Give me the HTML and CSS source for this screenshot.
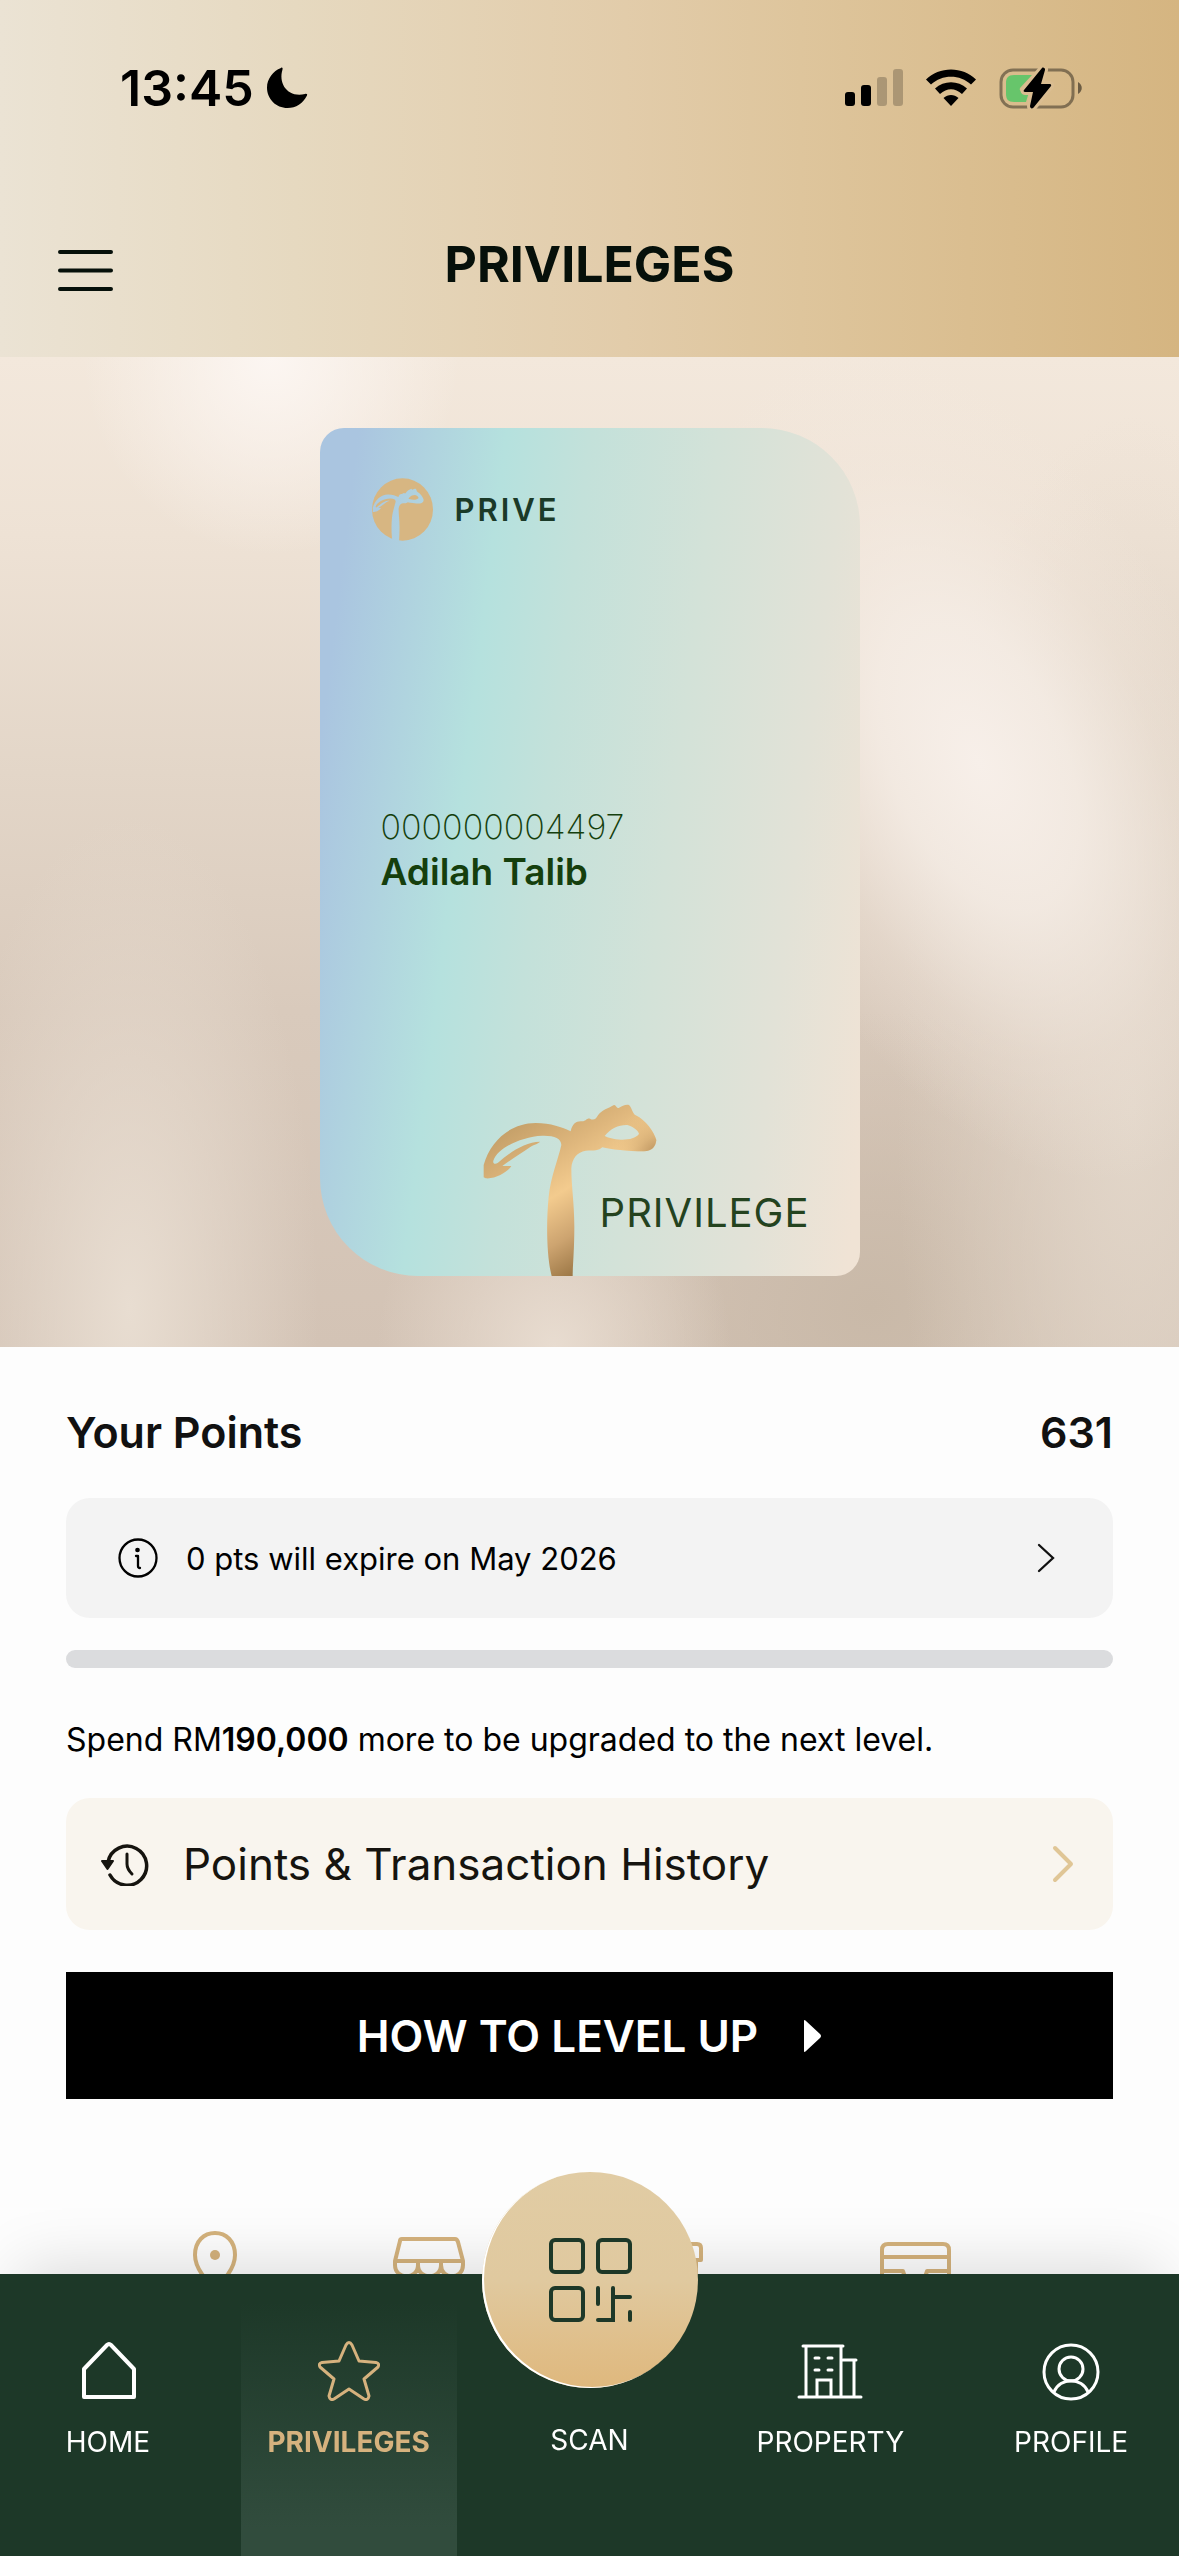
FILE: index.html
```html
<!DOCTYPE html>
<html lang="en">
<head>
<meta charset="UTF-8">
<meta name="viewport" content="width=device-width, initial-scale=1.0">
<title>Privileges</title>
<link rel="stylesheet" href="styles.css">
</head>
<body>
<header class="header">
  <div class="status-bar">
    <div class="status-left">
      <span class="time">13:45</span>
      <svg width="42" height="42" viewBox="0 0 42 42"><path d="M15 1C16 0 17 1 16.500 2.500C12 17 22 31 39 27C41 26.500 41.500 27.500 41 28.500C37 36.500 30 41 21.500 41C10 41 1 32 1 20.500C1 12 7 4 15 1Z"/></svg>
    </div>
    <div class="status-right">
      <svg width="58" height="38" viewBox="0 0 58 38">
        <rect x="0" y="23" width="10" height="14" rx="3"/>
        <rect x="16" y="16" width="10" height="21" rx="3"/>
        <rect x="32" y="8" width="10" height="29" rx="3" opacity=".22"/>
        <rect x="48" y="0" width="10" height="37" rx="3" opacity=".22"/>
      </svg>
      <svg width="52" height="38" viewBox="0 0 52 38">
        <path d="M1 10.500C14 -3 38 -3 51 10.500L46 15.500C35 5 17 5 6 15.500Z"/>
        <path d="M10 19.500C19 11 33 11 42 19.500L37 25C30 18.500 22 18.500 15 25Z"/>
        <path d="M18.500 29C23 25 29 25 33.500 29L26 37Z"/>
      </svg>
      <svg width="84" height="42" viewBox="0 0 84 42">
        <rect x="2" y="3" width="72" height="37" rx="12" fill="none" stroke="#000" stroke-opacity=".4" stroke-width="3"/>
        <path d="M79 15C84 18 84 24 79 27Z" opacity=".5"/>
        <path d="M15 8H33L21 21C20 24 22 25 30 25L27 35H15C9 35 7 32 7 27V16C7 11 9 8 15 8Z" fill="#67c56b"/>
        <path d="M43 1L25 23C24 24 25 25 26 25H34L31 39C31 42 34 42 35 40L52 19C52.500 18 52 17 51 17H42L46 3C46.500 1 44 0 43 1Z" stroke="#dabd91" stroke-width="6" paint-order="stroke"/>
      </svg>
    </div>
  </div>
  <div class="app-bar">
    <button class="menu-btn" type="button" aria-label="Menu">
      <svg width="56" height="56" viewBox="0 0 56 56" stroke="#06100a" stroke-width="4" stroke-linecap="round"><path d="M3 16H54M3 34.500H54M3 53H54"/></svg>
    </button>
    <h1 class="title">PRIVILEGES</h1>
  </div>
</header>

<main>
  <section class="hero">
    <div class="card">
      <div class="card-brand">
        <svg width="61" height="63" viewBox="36 26 182 188">
          <defs>
            <path id="palm" fill-rule="evenodd" d="M39 262L39 225C60 150 120 100 195 99C240 99 275 112 300 124C305 100 318 92 335 94C345 94 348 84 358 86C368 92 376 88 382 76C392 60 415 54 430 45C436 44 436 54 444 54C455 48 465 42 475 45C485 55 485 70 495 76C525 90 550 125 557 150C555 170 545 182 520 184C470 184 420 178 395 172C385 182 370 182 345 182C320 186 304 205 302 235C302 290 311 340 311 410C311 480 306 530 306 558L243 558C228 500 226 400 234 320C240 260 262 210 272 165C272 145 250 136 215 137C150 140 80 175 68 212C66 222 74 224 82 218C120 185 165 155 208 155C205 160 195 162 180 170C150 190 120 210 95 228C105 228 112 228 122 228C112 245 75 268 45 265ZM402 138C420 115 445 104 470 105C490 110 505 125 505 132C495 145 475 150 450 149C430 148 410 143 402 138Z"/>
            <mask id="palm-cut" maskUnits="userSpaceOnUse" x="30" y="20" width="200" height="200">
              <rect x="30" y="20" width="200" height="200" fill="#fff"/>
              <use href="#palm" transform="translate(27 44) scale(.293 .315)" fill="#000"/>
            </mask>
          </defs>
          <ellipse cx="127" cy="120" rx="91" ry="93" fill="#d7b682" mask="url(#palm-cut)"/>
        </svg>
        <span class="tier">PRIVE</span>
      </div>
      <div class="card-holder">
        <p class="card-number">000000004497</p>
        <p class="card-name">Adilah Talib</p>
      </div>
      <svg class="card-palm" width="174" height="172" viewBox="37 42 522 516">
        <defs>
          <linearGradient id="gold" gradientUnits="userSpaceOnUse" x1="110" y1="110" x2="370" y2="540">
            <stop offset="0" stop-color="#c49f68"/>
            <stop offset=".28" stop-color="#deb67c"/>
            <stop offset=".5" stop-color="#f3cb8e"/>
            <stop offset=".75" stop-color="#cda470"/>
            <stop offset="1" stop-color="#94703f"/>
          </linearGradient>
          <radialGradient id="gold-tip" gradientUnits="userSpaceOnUse" cx="560" cy="190" r="140">
            <stop offset="0" stop-color="#b8905c"/>
            <stop offset="1" stop-color="#f0c88b" stop-opacity="0"/>
          </radialGradient>
        </defs>
        <use href="#palm" fill="url(#gold)"/>
        <use href="#palm" fill="url(#gold-tip)"/>
      </svg>
      <p class="card-label">PRIVILEGE</p>
    </div>
  </section>

  <section class="content">
    <div class="points">
      <h2>Your Points</h2>
      <span class="points-value">631</span>
    </div>

    <button class="expiry" type="button">
      <svg width="40" height="40" viewBox="0 0 40 40" fill="none" stroke="#000" stroke-width="2.300" stroke-linecap="round" stroke-linejoin="round">
        <circle cx="20" cy="20" r="18.500"/>
        <path d="M18 18H20V28Q20 30 22 30"/>
        <circle cx="19.500" cy="12" r="1.200" fill="#000"/>
      </svg>
      <span class="row-text">0 pts will expire on May 2026</span>
      <svg width="18" height="30" viewBox="0 0 18 30" fill="none" stroke="#111" stroke-width="2.300" stroke-linecap="round"><path d="M2 2L16 15L2 28"/></svg>
    </button>

    <div class="progress" role="progressbar" aria-label="Level progress" aria-valuenow="0" aria-valuemin="0" aria-valuemax="100"></div>
    <p class="spend">Spend RM<b>190,000</b> more to be upgraded to the next level.</p>

    <button class="history" type="button">
      <svg width="48" height="44" viewBox="0 0 48 44" fill="none" stroke="#16140f" stroke-width="3.500" stroke-linecap="round">
        <path d="M7 20A19.500 19.500 0 1 1 9 33"/>
        <path d="M26 12V22Q26 27 31 32" stroke-width="3"/>
        <path d="M1 19H12L6.500 27Z" fill="#16140f" stroke-width="2" stroke-linejoin="round"/>
      </svg>
      <span class="row-text">Points &amp; Transaction History</span>
      <svg width="22" height="38" viewBox="0 0 22 38" fill="none" stroke="#e0c696" stroke-width="4" stroke-linecap="round" stroke-linejoin="round"><path d="M3 3L19 19L3 35"/></svg>
    </button>

    <button class="level-up" type="button">
      HOW TO LEVEL UP
      <svg width="18" height="32" viewBox="0 0 18 32" fill="#fff"><path d="M0 1Q0 -1 2 1L16 14Q18 16 16 18L2 31Q0 33 0 31Z"/></svg>
    </button>

    <nav class="shortcuts" aria-label="Shortcuts">
      <a href="#outlets" aria-label="Outlets">
        <svg width="44" height="60" viewBox="0 0 44 60" fill="none" stroke="#d4b27c" stroke-width="4"><path d="M22 58C14 50 2 38 2 24C2 10 11 2 22 2S42 10 42 24C42 38 30 50 22 58Z"/><circle cx="22" cy="24" r="5" fill="#d4b27c" stroke="none"/></svg>
      </a>
      <a href="#shops" aria-label="Shops">
        <svg width="72" height="60" viewBox="0 -6 72 60" fill="none" stroke="#d4b27c" stroke-width="4" stroke-linejoin="round"><path d="M9 2H62Q64 2 65 5L70 24V28C70 43 48 43 48 28C48 43 25 43 25 28C25 43 2 43 2 28V24L7 4Q7 2 9 2ZM2 24H70M25 24V28M48 24V28M9 40V52H63V40"/></svg>
      </a>
      <a href="#vouchers" aria-label="Vouchers">
        <svg width="66" height="60" viewBox="0 -11 66 60" fill="none" stroke="#d4b27c" stroke-width="4" stroke-linejoin="round"><path d="M6 2H60Q64 2 64 6V18H2V6Q2 2 6 2ZM7 18V50H59V18"/></svg>
      </a>
      <a href="#wallet" aria-label="Wallet">
        <svg width="72" height="60" viewBox="0 -11 72 60" fill="none" stroke="#d4b27c" stroke-width="4" stroke-linejoin="round"><path d="M8 2H63Q69 2 69 8V46H2V8Q2 2 8 2ZM2 15H69M2 29H23C25 42 45 42 47 29H69"/></svg>
      </a>
    </nav>
  </section>
</main>

<nav class="tab-bar" aria-label="Main">
  <a class="tab" href="#home">
    <svg width="60" height="60" viewBox="0 0 60 60" fill="none" stroke="#fff" stroke-width="4" stroke-linejoin="round"><path d="M6 56V28L29 4Q31 2 33 4L56 28V56Z"/></svg>
    <span>HOME</span>
  </a>
  <a class="tab active" href="#privileges" aria-current="page">
    <svg width="62" height="60" viewBox="0 0 62 60" fill="none" stroke="#d6b27e" stroke-width="3" stroke-linejoin="round"><path d="M28 4Q31 -1 34 4L41 20L58 21.500Q62 22.500 60 26L46 38L51 55Q50 60 46 58L31 48L16 58Q12 60 11 55L16 38L2 26Q0 22.500 4 21.500L21 20Z"/></svg>
    <span>PRIVILEGES</span>
  </a>
  <a class="tab scan" href="#scan">
    <span class="scan-btn">
      <svg width="84" height="84" viewBox="0 0 84 84" fill="none" stroke="#1d3828" stroke-width="4" stroke-linecap="round">
        <rect x="3" y="2" width="32" height="32" rx="4"/>
        <rect x="50" y="2" width="32" height="32" rx="4"/>
        <rect x="3" y="50" width="32" height="32" rx="4"/>
        <path d="M50 50V66M50 82H65V50M65 59H82M82 74V82"/>
      </svg>
    </span>
    <span>SCAN</span>
  </a>
  <a class="tab" href="#property">
    <svg width="66" height="60" viewBox="0 0 66 60" fill="none" stroke="#fff" stroke-width="3" stroke-linecap="round">
      <path d="M2 56H64M6 5H46M9 5V56M44 5V56M46 19H59M57 19V56M20 56V39H34V56M18 17H22M31 17H35M18 29H22M31 29H35"/>
    </svg>
    <span>PROPERTY</span>
  </a>
  <a class="tab" href="#profile">
    <svg width="60" height="60" viewBox="0 0 60 60" fill="none" stroke="#fff" stroke-width="3">
      <circle cx="30" cy="31" r="27"/>
      <circle cx="30" cy="28" r="12"/>
      <path d="M13 51C19 36 41 36 47 51"/>
    </svg>
    <span>PROFILE</span>
  </a>
</nav>
</body>
</html>
```

FILE: styles.css
```css
* {
  box-sizing: border-box;
}

body {
  margin: 0;
  background-color: #fdfdfd;
  color: #000;
  font-family: Inter, "Liberation Sans", sans-serif;
}

h1,
h2,
p {
  margin: 0;
}

button {
  border: none;
  font-family: inherit;
  color: inherit;
  cursor: pointer;
}

svg {
  display: block;
  flex-shrink: 0;
}

/* Header */
.header {
  padding-bottom: 5px;
  background: linear-gradient(90deg, #ebe3d4 0%, #e6d9c0 25%, #e2ccaa 53%, #dec59c 68%, #d5b581 100%);
}

.status-bar {
  display: flex;
  justify-content: space-between;
  align-items: center;
  height: 176px;
  padding: 0 96px 0 120px;
}

.status-left {
  display: flex;
  align-items: center;
  gap: 12px;
}

.time {
  font-size: 50px;
  font-weight: 600;
}

.status-right {
  display: flex;
  align-items: center;
  gap: 22px;
}

.app-bar {
  display: grid;
  grid-template-columns: 1fr auto 1fr;
  align-items: center;
  height: 176px;
  padding: 0 57px;
}

.menu-btn {
  justify-self: start;
  padding: 0;
  background: none;
}

.title {
  font-size: 50px;
  font-weight: 700;
  color: #06100a;
}

/* Membership card */
.hero {
  position: relative;
  display: flex;
  justify-content: center;
  padding: 71px 0;
  overflow: hidden;
  background:
    radial-gradient(ellipse 16% 20% at 23% 0%, #fcf6f2 0%, rgba(252, 246, 242, 0) 100%),
    radial-gradient(ellipse 16% 50% at 11% 96%, #e8ddd1 0%, rgba(232, 221, 209, 0) 100%),
    radial-gradient(ellipse 15% 20% at 47% 100%, #e8dcd0 0%, rgba(232, 220, 208, 0) 100%),
    radial-gradient(ellipse 20% 70% at 96% 76%, #e2d6c9 0%, rgba(226, 214, 201, 0) 100%),
    radial-gradient(ellipse 28% 30% at 74% 96%, #c9b9a8 0%, rgba(201, 185, 168, 0) 100%),
    linear-gradient(#f3e8dc 0%, #eee2d5 18%, #e3d6c8 42%, #d9cabc 66%, #d3c3b5 100%);
}

/* soft diagonal light to the right of the card */
.hero::before {
  content: "";
  position: absolute;
  top: -4%;
  right: -4%;
  width: 42%;
  height: 90%;
  background: radial-gradient(closest-side, #f7efe9 0%, rgba(246, 238, 231, 0.8) 35%, rgba(244, 234, 225, 0.3) 70%, rgba(244, 234, 225, 0) 100%);
  transform: rotate(-24deg);
}

.card {
  position: relative;
  display: flex;
  flex-direction: column;
  width: 540px;
  height: 848px;
  padding: 50px 50px 40px 52px;
  border-radius: 24px 98px 24px 98px;
  overflow: hidden;
  background: linear-gradient(97deg, #aac5e0 6%, #b5e1de 29%, #c3e1da 42%, #d3e2d8 62%, #e2e2d7 82%, #f0e3d5 98%);
}

.card-brand {
  display: flex;
  align-items: center;
  gap: 22px;
}

.tier {
  font-size: 31px;
  font-weight: 600;
  letter-spacing: 3px;
  color: #1b3a28;
}

.card-holder {
  margin: 264px 0 0 9px;
  color: #153f0d;
}

.card-number {
  font-size: 34px;
  font-weight: 200;
  line-height: 44px;
}

.card-name {
  font-size: 37px;
  font-weight: 600;
  line-height: 46px;
}

.card-palm {
  position: absolute;
  left: 163px;
  bottom: 0;
}

.card-label {
  position: relative;
  align-self: flex-end;
  margin-top: auto;
  font-size: 40px;
  line-height: 46px;
  letter-spacing: 1px;
  color: #24431f;
}

/* Points */
.content {
  padding: 60px 66px 0;
}

.points {
  display: flex;
  justify-content: space-between;
  margin-bottom: 41px;
  font-size: 43px;
  font-weight: 600;
  line-height: 50px;
  color: #111;
}

.points h2 {
  font-size: 43px;
  font-weight: 600;
}

.expiry,
.history {
  display: flex;
  align-items: center;
  width: 100%;
  border-radius: 24px;
  text-align: left;
}

.row-text {
  flex: 1;
}

.expiry {
  gap: 28px;
  height: 120px;
  padding: 0 58px 0 52px;
  background-color: #f3f3f3;
  font-size: 31px;
}

.progress {
  height: 18px;
  margin: 32px 0 52px;
  border-radius: 9px;
  background-color: #dbdcde;
}

.spend {
  margin-bottom: 38px;
  font-size: 32px;
  line-height: 40px;
}

.spend b {
  font-weight: 600;
}

.history {
  gap: 34px;
  height: 132px;
  padding: 0 39px 0 35px;
  background-color: #f9f5ee;
  font-size: 44px;
  color: #16140f;
}

.level-up {
  display: flex;
  justify-content: center;
  align-items: center;
  gap: 46px;
  width: 100%;
  height: 127px;
  margin-top: 42px;
  background-color: #000;
  color: #fff;
  font-size: 44px;
  font-weight: 600;
}

.shortcuts {
  display: grid;
  grid-template-columns: 198fr 230fr 254fr 238fr;
  justify-items: center;
  margin-top: 132px;
  padding: 0 78px 0 50px;
}

/* Bottom navigation */
.tab-bar {
  position: fixed;
  left: 0;
  right: 0;
  bottom: 0;
  display: flex;
  gap: 25px;
  height: 282px;
  background-color: #1d3828;
  box-shadow: 0 -25px 60px -20px rgba(0, 0, 0, 0.15);
}

.tab {
  display: flex;
  flex: 1;
  flex-direction: column;
  align-items: center;
  gap: 23px;
  padding-top: 67px;
  color: #fff;
  font-size: 28px;
  line-height: 36px;
  text-decoration: none;
}

.tab.active {
  background: linear-gradient(rgba(49, 76, 61, 0) 10%, #314c3d 90%);
  color: #d6b27e;
  font-weight: 700;
}

.tab.scan {
  gap: 34px;
  margin-top: -102px;
  padding-top: 0;
}

.scan-btn {
  display: flex;
  justify-content: center;
  align-items: center;
  width: 216px;
  height: 216px;
  border-radius: 50%;
  background: linear-gradient(#e1cca4 0%, #e0c99f 50%, #dfb87d 100%);
  box-shadow: inset 2px -1px 0 #fff;
}
```
